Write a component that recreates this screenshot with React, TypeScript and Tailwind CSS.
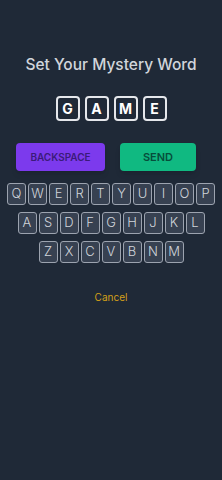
import React from 'react';

const rows = ['QWERTYUIOP', 'ASDFGHJKL', 'ZXCVBNM'];
const word = ['G', 'A', 'M', 'E'];

const App = () => {
  return (
    <div className="w-[222px] h-[480px] bg-[#1f2937] flex flex-col items-center font-['Inter',sans-serif]">
      <h1 className="mt-[55px] text-[15.5px] leading-[20px] font-medium text-[#d1d5db]">Set Your Mystery Word</h1>

      <div className="mt-[21px] flex gap-[5px]">
        {word.map((l, i) => (
          <div key={i} className="w-[24px] h-[25px] border-2 border-[#e5e7eb] rounded-[4px] flex items-center justify-center text-white font-bold text-[14px]">
            {l}
          </div>
        ))}
      </div>

      <div className="mt-[22px] mr-[10px] flex gap-[15px]">
        <button className="w-[89px] h-[28px] rounded-[4px] bg-[#7c3aed] text-[#3b1a7a] text-[10px] font-semibold shadow-md">
          BACKSPACE
        </button>
        <button className="w-[76px] h-[28px] rounded-[4px] bg-[#10b981] text-[#064e3b] text-[11px] font-semibold shadow-md">
          SEND
        </button>
      </div>

      <div className="mt-[12px] flex flex-col items-center gap-[7px]">
        {rows.map((row) => (
          <div key={row} className="flex gap-[2px]">
            {row.split('').map((k) => (
              <div key={k} className="w-[19px] h-[22px] rounded-[3px] border border-[#9ca3af] bg-[#374151] flex items-center justify-center text-[13px] font-light text-[#d1d5db]">
                {k}
              </div>
            ))}
          </div>
        ))}
      </div>

      <button className="mt-[27px] text-[10px] text-[#d4a017]">Cancel</button>
    </div>
  );
};

export default App;
